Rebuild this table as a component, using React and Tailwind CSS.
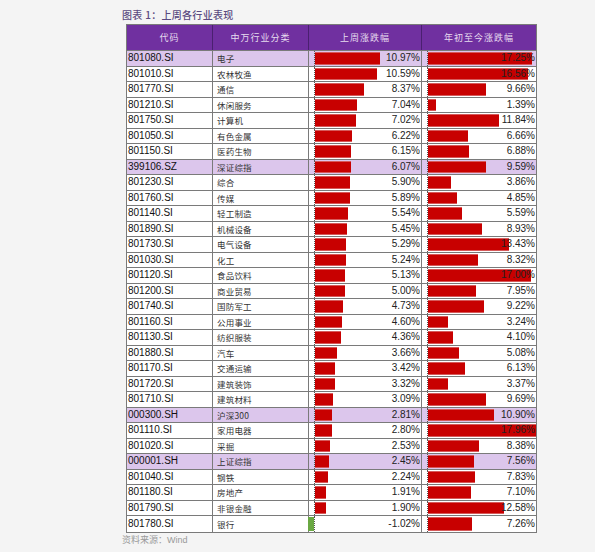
import React from "react";

const rows = [
  ["801080.SI", "电子", 10.97, 17.25, true],
  ["801010.SI", "农林牧渔", 10.59, 16.56],
  ["801770.SI", "通信", 8.37, 9.66],
  ["801210.SI", "休闲服务", 7.04, 1.39],
  ["801750.SI", "计算机", 7.02, 11.84],
  ["801050.SI", "有色金属", 6.22, 6.66],
  ["801150.SI", "医药生物", 6.15, 6.88],
  ["399106.SZ", "深证综指", 6.07, 9.59, true],
  ["801230.SI", "综合", 5.9, 3.86],
  ["801760.SI", "传媒", 5.89, 4.85],
  ["801140.SI", "轻工制造", 5.54, 5.59],
  ["801890.SI", "机械设备", 5.45, 8.93],
  ["801730.SI", "电气设备", 5.29, 13.43],
  ["801030.SI", "化工", 5.24, 8.32],
  ["801120.SI", "食品饮料", 5.13, 17.0],
  ["801200.SI", "商业贸易", 5.0, 7.95],
  ["801740.SI", "国防军工", 4.73, 9.22],
  ["801160.SI", "公用事业", 4.6, 3.24],
  ["801130.SI", "纺织服装", 4.36, 4.1],
  ["801880.SI", "汽车", 3.66, 5.08],
  ["801170.SI", "交通运输", 3.42, 6.13],
  ["801720.SI", "建筑装饰", 3.32, 3.37],
  ["801710.SI", "建筑材料", 3.09, 9.69],
  ["000300.SH", "沪深300", 2.81, 10.9, true],
  ["801110.SI", "家用电器", 2.8, 17.96],
  ["801020.SI", "采掘", 2.53, 8.38],
  ["000001.SH", "上证综指", 2.45, 7.56, true],
  ["801040.SI", "钢铁", 2.24, 7.83],
  ["801180.SI", "房地产", 1.91, 7.1],
  ["801790.SI", "非银金融", 1.9, 12.58],
  ["801780.SI", "银行", -1.02, 7.26],
];

function BarCell({ value, scale, last }) {
  const w = Math.abs(value) * scale;
  const neg = value < 0;
  return (
    <div className={`relative h-full ${last ? "" : "border-r border-[#7a7a7a]"}`}>
      <div className="absolute top-0 bottom-0 left-[5px] border-l border-dotted border-[#555]" />
      {neg ? (
        <div
          className="absolute top-[1px] bottom-[1px] bg-[#6aa843]"
          style={{ left: 5 - w, width: w }}
        />
      ) : (
        <div
          className="absolute top-[1px] bottom-[1px] left-[6px] bg-[#c80000] border-y border-[#d65a5a]"
          style={{ width: w }}
        />
      )}
      <div className="relative h-full flex items-center justify-end pr-[1px] text-[10px] leading-none text-[#222] font-['Liberation_Sans',Arial,sans-serif]">
        {value.toFixed(2)}%
      </div>
    </div>
  );
}

export default function App() {
  return (
    <div className="w-[595px] h-[552px] bg-[#f4f4f4] overflow-hidden font-['Noto_Sans_CJK_SC','Noto_Sans',sans-serif]">
      <div className="pl-[122px] pt-[8px] h-[24px] text-[10px] leading-[14px] font-medium tracking-[0.3px] text-[#5a4a80]">
        图表 1：上周各行业表现
      </div>
      <div className="ml-[126px] w-[411px] border border-[#7a7a7a] bg-white">
        <div className="grid grid-cols-[86px_96px_113px_114px] h-[26px] bg-[#7030a0] text-[#e6dcef] text-[9px] tracking-[1px] border-b border-[#7a7a7a]">
          <div className="flex items-center justify-center border-r border-[#4a2070]">代码</div>
          <div className="flex items-center justify-center border-r border-[#4a2070]">中万行业分类</div>
          <div className="flex items-center justify-center border-r border-[#4a2070]">上周涨跌幅</div>
          <div className="flex items-center justify-center">年初至今涨跌幅</div>
        </div>
        {rows.map(([code, name, wk, ytd, hl], i) => (
          <div
            key={code}
            className={`grid grid-cols-[86px_96px_113px_114px] h-[15.5px] ${
              i < rows.length - 1 ? "border-b border-[#7a7a7a]" : ""
            } ${hl ? "bg-[#dcc6ec]" : "bg-white"}`}
          >
            <div className="flex items-center pl-[1px] border-r border-[#7a7a7a] text-[10px] leading-none text-[#111] font-['Liberation_Sans',Arial,sans-serif]">
              {code}
            </div>
            <div className="flex items-center pl-[4px] border-r border-[#7a7a7a] text-[8.5px] leading-none text-[#333] tracking-[0.2px]">
              {name}
            </div>
            <BarCell value={wk} scale={5.9} />
            <BarCell value={ytd} scale={6.03} last />
          </div>
        ))}
      </div>
      <div className="pl-[122px] pt-[1px] text-[9px] leading-[12px] text-[#9a9a9a]">
        资料来源：<span className="font-['Liberation_Sans',Arial,sans-serif]">Wind</span>
      </div>
    </div>
  );
}
